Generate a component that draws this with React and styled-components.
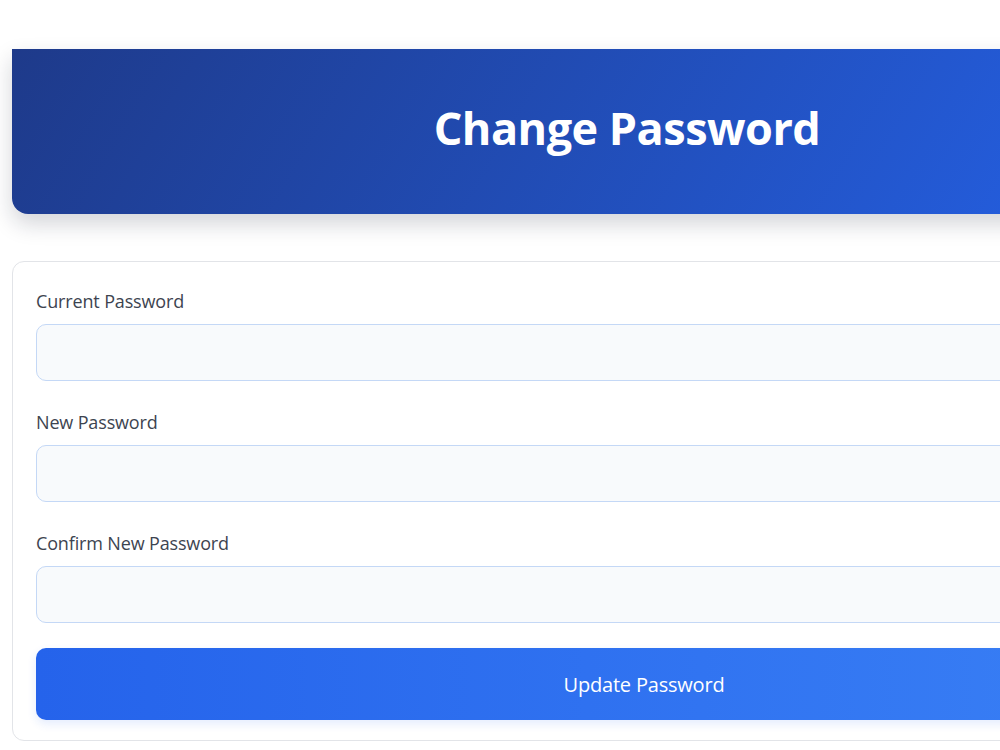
import React from "react";
import styled, { createGlobalStyle } from "styled-components";

const Global = createGlobalStyle`
  html, body {
    margin: 0;
    padding: 0;
    background: #ffffff;
    overflow: hidden;
  }
  body {
    font-family: "Open Sans", "Noto Sans", Arial, sans-serif;
    color: #374151;
  }
  * { box-sizing: border-box; }
`;

const Page = styled.div`
  width: 1288px;
  padding: 49px 12px 24px;
  display: flex;
  flex-direction: column;
  gap: 47px;
`;

const Header = styled.header`
  width: 1230px;
  height: 165px;
  padding-bottom: 8px;
  display: flex;
  align-items: center;
  justify-content: center;
  background: linear-gradient(120deg, #1e3a8a 0%, #2563eb 100%);
  border-radius: 0 0 16px 16px;
  box-shadow: 0 10px 22px rgba(15, 23, 42, 0.18);
`;

const Title = styled.h1`
  margin: 0;
  color: #ffffff;
  font-size: 45px;
  font-weight: 700;
  letter-spacing: -0.5px;
  line-height: 1.2;
`;

const Card = styled.form`
  width: 1264px;
  padding: 24px 23px 20px;
  border: 1px solid #e2e4e8;
  border-radius: 12px;
  background: #ffffff;
  display: flex;
  flex-direction: column;
`;

const Field = styled.div`
  display: flex;
  flex-direction: column;
  margin-bottom: 26px;
`;

const Label = styled.label`
  font-size: 18px;
  letter-spacing: -0.15px;
  line-height: 24px;
  padding-top: 3px;
  color: #3d4450;
  margin-bottom: 11px;
`;

const Input = styled.input`
  height: 57px;
  width: 100%;
  border: 1px solid #c4d8f6;
  border-radius: 10px;
  background: #f8fafc;
  padding: 0 16px;
  font-family: inherit;
  font-size: 17px;
  outline: none;
`;

const Submit = styled.button`
  height: 72px;
  width: 100%;
  margin-top: -1px;
  border: none;
  border-radius: 10px;
  background: linear-gradient(90deg, #2563eb 0%, #3b82f6 100%);
  box-shadow: 0 4px 10px rgba(37, 99, 235, 0.12);
  color: #ffffff;
  font-family: inherit;
  font-size: 20px;
  letter-spacing: -0.2px;
  cursor: pointer;
`;

const fields = [
  { id: "current", label: "Current Password" },
  { id: "next", label: "New Password" },
  { id: "confirm", label: "Confirm New Password" },
];

export default function App() {
  return (
    <>
      <Global />
      <Page>
        <Header>
          <Title>Change Password</Title>
        </Header>
        <Card onSubmit={(e) => e.preventDefault()}>
          {fields.map((f) => (
            <Field key={f.id}>
              <Label htmlFor={f.id}>{f.label}</Label>
              <Input id={f.id} type="password" />
            </Field>
          ))}
          <Submit type="submit">Update Password</Submit>
        </Card>
      </Page>
    </>
  );
}
